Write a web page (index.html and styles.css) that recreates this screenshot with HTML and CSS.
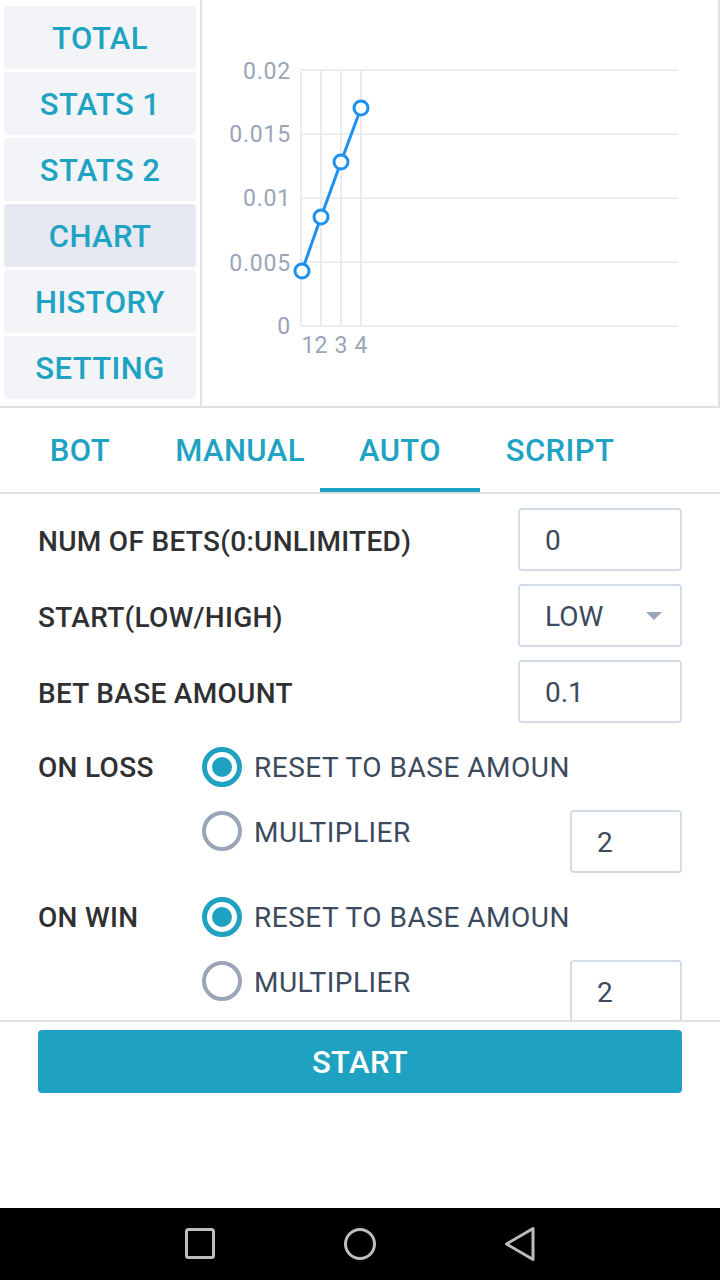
FILE: index.html
```html
<!DOCTYPE html>
<html>
<head>
<meta charset="utf-8">
<link rel="stylesheet" href="styles.css">
</head>
<body>
<div class="app">
  <div class="top">
    <nav class="side">
      <div class="side-btn">TOTAL</div>
      <div class="side-btn">STATS 1</div>
      <div class="side-btn">STATS 2</div>
      <div class="side-btn active">CHART</div>
      <div class="side-btn">HISTORY</div>
      <div class="side-btn">SETTING</div>
    </nav>
    <div class="chart">
      <svg class="chart-svg" viewBox="202 0 516 406" width="516" height="406">
        <g class="grid">
          <line x1="301" y1="70" x2="678" y2="70"/>
          <line x1="301" y1="134" x2="678" y2="134"/>
          <line x1="301" y1="198" x2="678" y2="198"/>
          <line x1="301" y1="262" x2="678" y2="262"/>
          <line x1="301" y1="326" x2="678" y2="326"/>
          <line x1="301" y1="70" x2="301" y2="326"/>
          <line x1="321" y1="70" x2="321" y2="326"/>
          <line x1="341" y1="70" x2="341" y2="326"/>
          <line x1="361" y1="70" x2="361" y2="326"/>
        </g>
        <g class="ylab">
          <text x="291" y="79">0.02</text>
          <text x="291" y="142">0.015</text>
          <text x="291" y="206">0.01</text>
          <text x="291" y="271">0.005</text>
          <text x="291" y="334">0</text>
        </g>
        <g class="xlab">
          <text x="308" y="353">1</text>
          <text x="321" y="353">2</text>
          <text x="341" y="353">3</text>
          <text x="361" y="353">4</text>
        </g>
        <polyline class="series" points="302,271 321,217 341,162 361,108"/>
        <g class="pts">
          <circle cx="302" cy="271" r="7"/>
          <circle cx="321" cy="217" r="7"/>
          <circle cx="341" cy="162" r="7"/>
          <circle cx="361" cy="108" r="7"/>
        </g>
      </svg>
    </div>
  </div>

  <div class="tabs">
    <div class="tab">BOT</div>
    <div class="tab">MANUAL</div>
    <div class="tab active">AUTO</div>
    <div class="tab">SCRIPT</div>
  </div>

  <div class="form">
    <div class="row">
      <span class="label">NUM OF BETS(0:UNLIMITED)</span>
      <div class="field">0</div>
    </div>
    <div class="row">
      <span class="label">START(LOW/HIGH)</span>
      <div class="field select">LOW<span class="caret"></span></div>
    </div>
    <div class="row">
      <span class="label">BET BASE AMOUNT</span>
      <div class="field">0.1</div>
    </div>

    <div class="group">
      <span class="label glabel">ON LOSS</span>
      <div class="options">
        <div class="opt">
          <span class="radio checked"></span>
          <span class="opt-text">RESET TO BASE AMOUN</span>
        </div>
        <div class="opt">
          <span class="radio offset"></span>
          <span class="opt-text offset">MULTIPLIER</span>
          <div class="field small">2</div>
        </div>
      </div>
    </div>

    <div class="group">
      <span class="label glabel">ON WIN</span>
      <div class="options">
        <div class="opt">
          <span class="radio checked"></span>
          <span class="opt-text">RESET TO BASE AMOUN</span>
        </div>
        <div class="opt">
          <span class="radio offset"></span>
          <span class="opt-text offset">MULTIPLIER</span>
          <div class="field small">2</div>
        </div>
      </div>
    </div>
  </div>

  <div class="actions">
    <div class="start-btn">START</div>
  </div>

  <div class="spacer"></div>

  <div class="navbar">
    <svg class="nav-ico" width="40" height="40" viewBox="0 0 40 40"><rect x="6.5" y="5.5" width="27" height="28" rx="2"/></svg>
    <svg class="nav-ico" width="40" height="40" viewBox="0 0 40 40"><circle cx="20" cy="20" r="14.5"/></svg>
    <svg class="nav-ico" width="40" height="40" viewBox="0 0 40 40"><path d="M33 4.5 L6.5 20 L33 35.5 Z"/></svg>
  </div>
</div>
</body>
</html>
```

FILE: styles.css
```css
* { box-sizing: border-box; }

html, body {
  margin: 0;
  padding: 0;
  background: #ffffff;
}

body {
  font-family: Roboto, "Liberation Sans", sans-serif;
}

.app {
  width: 720px;
  height: 1280px;
  display: flex;
  flex-direction: column;
  overflow: hidden;
}

/* top section */
.top {
  height: 408px;
  display: flex;
  border-bottom: 2px solid #dde1e6;
  flex-shrink: 0;
}

.side {
  width: 200px;
  padding: 6px 4px 0 4px;
  display: flex;
  flex-direction: column;
  gap: 3px;
}

.side-btn {
  height: 63px;
  padding-top: 2px;
  background: #f3f4f8;
  border-radius: 4px;
  display: flex;
  align-items: center;
  justify-content: center;
  color: #1ea3c2;
  font-size: 31px;
  letter-spacing: 0.4px;
  font-weight: 500;
}

.side-btn.active {
  background: #e5e8f0;
}

.chart {
  flex: 1;
  border-left: 2px solid #dde1e6;
  border-right: 2px solid #dde1e6;
}

.chart-svg {
  display: block;
}

.grid line {
  stroke: #ececec;
  stroke-width: 2;
}

.ylab text {
  fill: #9aa5b8;
  font-size: 23px;
  letter-spacing: 0.8px;
  text-anchor: end;
  font-family: Roboto, sans-serif;
}

.xlab text {
  fill: #9aa5b8;
  font-size: 23px;
  text-anchor: middle;
  font-family: Roboto, sans-serif;
}

.series {
  fill: none;
  stroke: #1e90ef;
  stroke-width: 3;
}

.pts circle {
  fill: #ffffff;
  stroke: #1e90ef;
  stroke-width: 3;
}

/* tabs */
.tabs {
  height: 86px;
  display: flex;
  border-bottom: 2px solid #dde1e6;
  flex-shrink: 0;
}

.tab {
  width: 160px;
  height: 84px;
  display: flex;
  align-items: center;
  justify-content: center;
  color: #1ea3c2;
  font-size: 31px;
  letter-spacing: 0.4px;
  font-weight: 500;
}

.tab.active {
  box-shadow: inset 0 -4px 0 #1fa2c1;
}

/* form */
.form {
  height: 528px;
  flex-shrink: 0;
  overflow: hidden;
  border-bottom: 2px solid #dde1e6;
  padding: 14px 38px 0 38px;
  display: flex;
  flex-direction: column;
}

.row {
  height: 63px;
  display: flex;
  align-items: center;
  justify-content: space-between;
  margin-bottom: 13px;
  flex-shrink: 0;
}

.label {
  color: #2f3033;
  font-size: 28px;
  letter-spacing: 0.3px;
  font-weight: 500;
}

.row .label {
  padding-top: 3px;
}

.field {
  width: 164px;
  height: 63px;
  border: 2px solid #d3dce8;
  border-radius: 4px;
  display: flex;
  align-items: center;
  padding-left: 25px;
  padding-top: 2px;
  color: #3c4a5e;
  font-size: 28px;
  flex-shrink: 0;
}

.field.select {
  justify-content: space-between;
  padding-right: 18px;
}

.caret {
  width: 0;
  height: 0;
  margin-top: -2px;
  border-left: 8px solid transparent;
  border-right: 8px solid transparent;
  border-top: 8px solid #9aa5b8;
}

.group {
  display: flex;
  align-items: flex-start;
  margin-top: 11px;
  margin-bottom: 13px;
  flex-shrink: 0;
}

.glabel {
  width: 164px;
  height: 40px;
  line-height: 40px;
  padding-top: 1px;
  flex-shrink: 0;
}

.options {
  flex: 1;
  display: flex;
  flex-direction: column;
  gap: 23px;
}

.opt {
  display: flex;
  align-items: flex-start;
  gap: 12px;
}

.opt .field.small {
  width: 112px;
  margin-left: auto;
  padding-left: 25px;
}

.radio.offset {
  margin-top: 1px;
}

.radio {
  width: 40px;
  height: 40px;
  border-radius: 50%;
  border: 4px solid #9aa5b8;
  flex-shrink: 0;
  display: flex;
  align-items: center;
  justify-content: center;
}

.radio.checked {
  border: 5px solid #1fa2c1;
}

.radio.checked::after {
  content: "";
  width: 20px;
  height: 20px;
  border-radius: 50%;
  background: #1fa2c1;
}

.opt-text {
  color: #3c4a5e;
  font-size: 28px;
  letter-spacing: 0.5px;
  height: 40px;
  line-height: 40px;
  padding-top: 1px;
  white-space: nowrap;
}

.opt-text.offset {
  height: 42px;
  padding-top: 3px;
}

/* actions */
.actions {
  padding: 8px 38px 0 38px;
  flex-shrink: 0;
}

.start-btn {
  height: 63px;
  padding-top: 2px;
  background: #1fa2c1;
  border-radius: 4px;
  color: #ffffff;
  font-size: 31px;
  letter-spacing: 0.4px;
  font-weight: 500;
  display: flex;
  align-items: center;
  justify-content: center;
}

.spacer {
  flex: 1;
}

.navbar {
  height: 72px;
  background: #000000;
  display: flex;
  align-items: center;
  justify-content: center;
  gap: 120px;
  flex-shrink: 0;
}

.nav-ico rect,
.nav-ico circle,
.nav-ico path {
  fill: none;
  stroke: #bdbdbd;
  stroke-width: 3;
  stroke-linejoin: round;
}
```
